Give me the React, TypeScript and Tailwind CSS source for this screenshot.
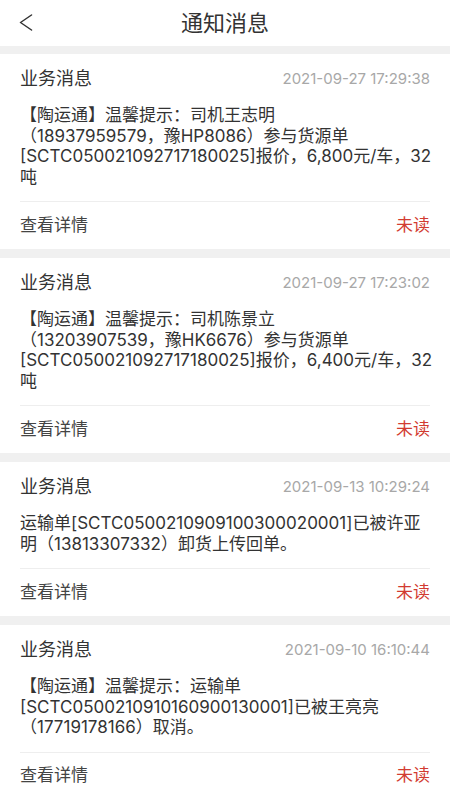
interface Notice {
  id: number;
  time: string;
  lines: string[];
}

const notices: Notice[] = [
  {
    id: 1,
    time: '2021-09-27 17:29:38',
    lines: [
      '【陶运通】温馨提示：司机王志明',
      '（18937959579，豫HP8086）参与货源单',
      '[SCTC050021092717180025]报价，6,800元/车，32',
      '吨',
    ],
  },
  {
    id: 2,
    time: '2021-09-27 17:23:02',
    lines: [
      '【陶运通】温馨提示：司机陈景立',
      '（13203907539，豫HK6676）参与货源单',
      '[SCTC050021092717180025]报价，6,400元/车，32',
      '吨',
    ],
  },
  {
    id: 3,
    time: '2021-09-13 10:29:24',
    lines: ['运输单[SCTC0500210909100300020001]已被许亚', '明（13813307332）卸货上传回单。'],
  },
  {
    id: 4,
    time: '2021-09-10 16:10:44',
    lines: ['【陶运通】温馨提示：运输单', '[SCTC0500210910160900130001]已被王亮亮', '（17719178166）取消。'],
  },
];

function NoticeCard({ notice }: { notice: Notice }) {
  return (
    <div className="bg-white px-5">
      <div className="flex items-center justify-between pt-[14px] leading-[22px]">
        <span className="text-[18px] text-[#333]">业务消息</span>
        <span className="text-[15px] text-[#a8a8a8]">{notice.time}</span>
      </div>
      <div className="mt-[15px] pb-[14px] text-[17px] leading-[20.5px] text-[#333]">
        {notice.lines.map((line, i) => (
          <div key={i} className="whitespace-nowrap">
            {line}
          </div>
        ))}
      </div>
      <div className="h-px bg-[#eeeeee]" />
      <div className="flex h-[47px] items-center justify-between text-[17px]">
        <span className="text-[#444]">查看详情</span>
        <span className="text-[#d23b31]">未读</span>
      </div>
    </div>
  );
}

export default function App() {
  return (
    <div
      className="min-h-[800px] bg-[#f0f0f0]"
      style={{ fontFamily: 'Inter, "Noto Sans CJK SC", sans-serif' }}
    >
      <div className="relative flex h-[46px] items-center justify-center bg-white">
        <svg
          className="absolute left-[19px] top-[14px]"
          width="14"
          height="17"
          viewBox="0 0 14 17"
          fill="none"
          stroke="#333"
          strokeWidth="1.5"
          strokeLinecap="round"
          strokeLinejoin="round"
        >
          <polyline points="12.5,1 1.5,8.5 12.5,16" />
        </svg>
        <span className="text-[22px] text-[#333]">通知消息</span>
      </div>
      <div className="flex flex-col gap-[9px] pt-2">
        {notices.map((n) => (
          <NoticeCard key={n.id} notice={n} />
        ))}
      </div>
    </div>
  );
}
